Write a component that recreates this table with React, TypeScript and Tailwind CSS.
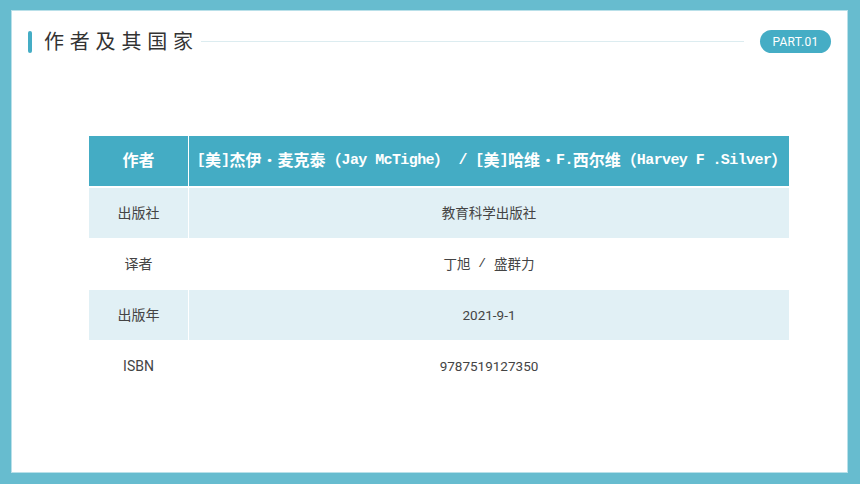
import React from 'react'

const cjk = "font-['Roboto','Noto_Sans_CJK_SC',sans-serif]"

// half-width latin parts in the header, squeezed to a ~8.4px pitch
const Mono: React.FC<{ children: React.ReactNode }> = ({ children }) => (
  <span className="font-['Liberation_Mono','Noto_Sans_CJK_SC',monospace] text-[15px] tracking-[-0.6px] whitespace-pre">
    {children}
  </span>
)

const Dot = () => <span className="inline-block w-[16px] text-center text-[22px] leading-none">·</span>

const rows = [
  { label: '出版社', value: <>教育科学出版社</>, shade: true },
  {
    label: '译者',
    value: (
      <>
        丁旭<span className="font-['Liberation_Mono',monospace] whitespace-pre text-[13px]"> / </span>盛群力
      </>
    ),
    shade: false,
  },
  { label: '出版年', value: <>2021-9-1</>, shade: true },
  { label: 'ISBN', value: <>9787519127350</>, shade: false },
]

export default function App() {
  return (
    <div className={`w-[860px] h-[484px] bg-[#67bccf] pt-[10px] pl-[11px] pr-[12px] pb-[11px] ${cjk}`}>
      <div className="w-full h-full bg-white border border-[#b9e0e9] flex flex-col px-[16px] pt-[19px]">
        {/* title bar */}
        <div className="flex items-center h-[23px]">
          <div className="w-[4px] h-[22px] rounded-full bg-[#45adc5]" />
          <div className="ml-[12px] text-[20px] leading-none tracking-[5.8px] text-[#333]">作者及其国家</div>
          <div className="flex-1 h-px bg-[#dcecf0] ml-[2px] mr-[16px]" />
          <div className="w-[71px] h-[23px] rounded-full bg-[#45adc5] flex items-center justify-center text-white text-[12px] tracking-[0.3px]">
            PART.01
          </div>
        </div>

        {/* table */}
        <div className="mt-[83px] ml-[61px] w-[700px] flex flex-col gap-[1px]">
          <div className="flex h-[50px] mb-[1px] bg-[#44acc4] text-white font-bold">
            <div className="w-[100px] shrink-0 border-r border-white flex items-center justify-center text-[16px]">作者</div>
            <div className="flex-1 min-w-0 flex items-center justify-center pl-[6px] text-[16px] whitespace-nowrap">
              <Mono>[</Mono>美<Mono>]</Mono>杰伊<Dot />麦克泰（<Mono>Jay McTighe</Mono>）<Mono> / [</Mono>美<Mono>]</Mono>哈维<Dot /><Mono>F.</Mono>西尔维（<Mono>Harvey F .Silver</Mono>）
            </div>
          </div>
          {rows.map((r) => (
            <div key={r.label} className={`flex h-[50px] text-[#444] ${r.shade ? 'bg-[#e1f0f5]' : 'bg-white'}`}>
              <div className="w-[100px] shrink-0 border-r border-white flex items-center justify-center text-[14px]">{r.label}</div>
              <div className="flex-1 flex items-center justify-center text-[13.5px]">{r.value}</div>
            </div>
          ))}
        </div>
      </div>
    </div>
  )
}
